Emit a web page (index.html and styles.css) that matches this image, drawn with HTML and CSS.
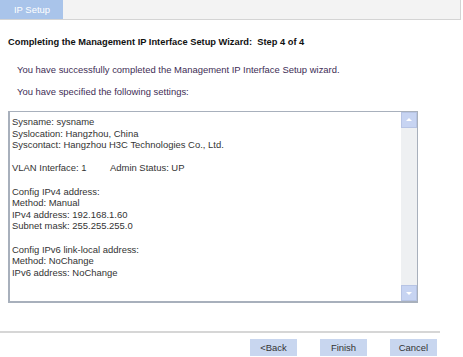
FILE: index.html
```html
<!DOCTYPE html>
<html lang="en">
  <head>
    <meta charset="UTF-8" />
    <title>IP Setup</title>
    <link rel="stylesheet" href="styles.css">
  </head>
  <body>
    <div class="tabbar">
      <span class="tab">IP Setup</span>
    </div>
    <main class="wizard">
      <h1 class="title">Completing the Management IP Interface Setup Wizard:&nbsp; Step 4 of 4</h1>
      <p class="note">You have successfully completed the Management IP Interface Setup wizard.</p>
      <p class="note">You have specified the following settings:</p>
      <div class="summary">
        <div class="summary-text">
          <div>Sysname: sysname</div>
          <div>Syslocation: Hangzhou, China</div>
          <div>Syscontact: Hangzhou H3C Technologies Co., Ltd.</div>
          <div class="gap"></div>
          <div class="row"><span class="cell">VLAN Interface: 1</span><span>Admin Status: UP</span></div>
          <div class="gap"></div>
          <div>Config IPv4 address:</div>
          <div>Method: Manual</div>
          <div>IPv4 address: 192.168.1.60</div>
          <div>Subnet mask: 255.255.255.0</div>
          <div class="gap"></div>
          <div>Config IPv6 link-local address:</div>
          <div>Method: NoChange</div>
          <div>IPv6 address: NoChange</div>
        </div>
        <div class="scrollbar">
          <span class="arrow up"></span>
          <span class="track"></span>
          <span class="arrow down"></span>
        </div>
      </div>
    </main>
    <footer class="actions">
      <button type="button" class="btn">&lt;Back</button>
      <button type="button" class="btn">Finish</button>
      <button type="button" class="btn">Cancel</button>
    </footer>
  </body>
</html>
```

FILE: styles.css
```css
body {
  margin: 0;
  width: 463px;
  height: 357px;
  font-family: "Liberation Sans", Arial, sans-serif;
  font-size: 9.45px;
  color: #222;
  background: #fff;
  overflow: hidden;
}

.tabbar {
  display: flex;
  width: 460px;
  height: 19px;
  background: #f3f3f3;
  border: 1px solid #d4d4d4;
  border-left: none;
  border-top: none;
}
.tab {
  width: 63px;
  padding-left: 14px;
  box-sizing: border-box;
  background: #a9c4ea;
  color: #fff;
  line-height: 19px;
}

.wizard {
  padding: 17px 0 0 8px;
}

.title {
  margin: 0 0 17px;
  font-size: 9.3px;
  font-weight: bold;
  color: #111;
}

.note {
  margin: 0 0 11px 9px;
  color: #3e2d55;
}

.summary {
  display: flex;
  width: 407px;
  height: 189px;
  margin-top: 14px;
  border: 1px solid #a8b0bc;
  border-bottom-width: 2px;
  border-left-width: 2px;
}
.summary-text {
  flex: 1;
  padding: 4px 0 0 2px;
  color: #333;
  line-height: 11.6px;
}
.gap {
  height: 11.6px;
}
.row .cell {
  display: inline-block;
  width: 98px;
}

.scrollbar {
  display: flex;
  flex-direction: column;
  width: 16px;
  background: #eef0f2;
}
.scrollbar .track {
  flex: 1;
}
.arrow {
  position: relative;
  height: 16px;
  background: #c7d4f2;
  border: 1px solid #b7c4e4;
  box-sizing: border-box;
}
.arrow::after {
  content: "";
  position: absolute;
  left: 4px;
  border-left: 3px solid transparent;
  border-right: 3px solid transparent;
}
.arrow.up::after {
  top: 5px;
  border-bottom: 3px solid #fff;
}
.arrow.down::after {
  top: 6px;
  border-top: 3px solid #fff;
}

.actions {
  display: flex;
  gap: 23px;
  justify-content: flex-end;
  width: 440px;
  margin-top: 28px;
  padding: 6px 3px 0 0;
  border-top: 2px solid #d6d6d6;
  box-sizing: border-box;
}
.btn {
  width: 47px;
  height: 17px;
  padding: 0;
  border: none;
  background: #c8d6ef;
  color: #333;
  font-family: "Liberation Sans", Arial, sans-serif;
  font-size: 9.45px;
}
```
